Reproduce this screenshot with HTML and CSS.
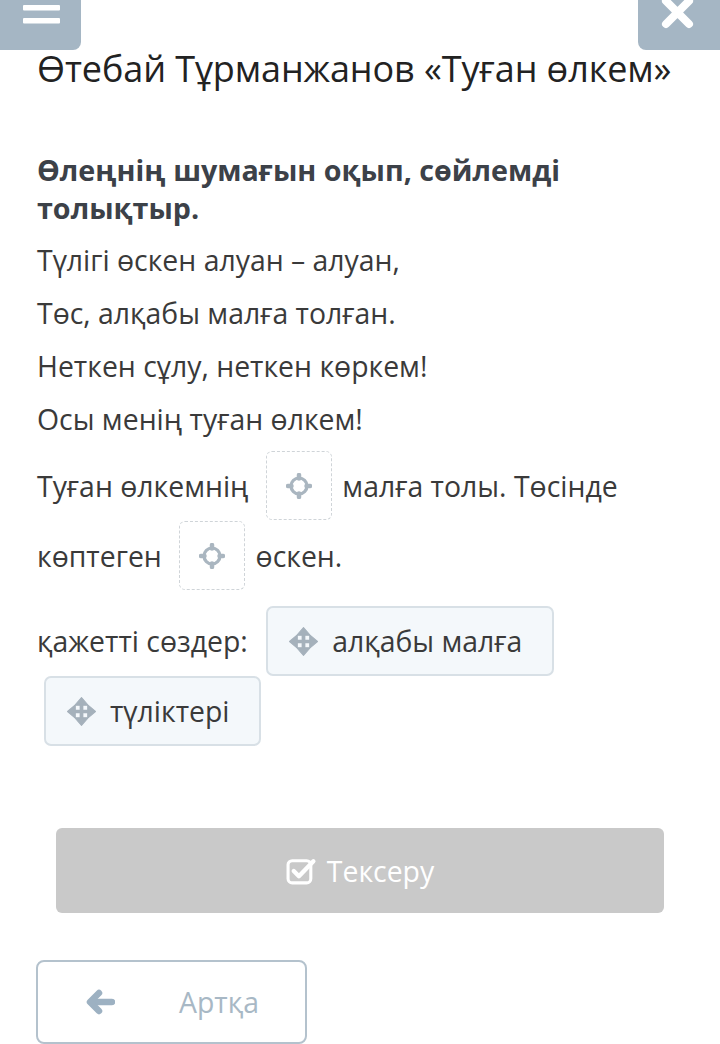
FILE: index.html
```html
<!DOCTYPE html>
<html lang="kk">
<head>
<meta charset="utf-8">
<title>Туған өлкем</title>
<link rel="stylesheet" href="styles.css">
</head>
<body>
<div class="topbar">
  <button class="corner corner-left" aria-label="menu">
    <svg class="corner-icon" viewBox="0 0 81 50" width="81" height="50"><rect x="23" y="-8" width="37" height="5.5" rx="1" fill="#fff"/><rect x="23" y="5" width="37" height="5.5" rx="1" fill="#fff"/><rect x="23" y="18" width="37" height="5.5" rx="1" fill="#fff"/></svg>
  </button>
  <button class="corner corner-right" aria-label="close">
    <svg class="corner-icon" viewBox="0 0 82 50" width="82" height="50"><path d="M28 1 L51 24 M51 1 L28 24" stroke="#fff" stroke-width="8" stroke-linecap="round"/></svg>
  </button>
</div>
<main class="content">
  <h1 class="title">Өтебай Тұрманжанов «Туған өлкем»</h1>
  <h2 class="task">Өлеңнің шумағын оқып, сөйлемді толықтыр.</h2>
  <div class="poem">
    <p>Түлігі өскен алуан – алуан,</p>
    <p>Төс, алқабы малға толған.</p>
    <p>Неткен сұлу, неткен көркем!</p>
    <p>Осы менің туған өлкем!</p>
  </div>
  <p class="sentence">Туған өлкемнің <span class="drop"><svg viewBox="0 0 26 26" width="26" height="26"><circle cx="13" cy="13" r="8" fill="none" stroke="#aab6c0" stroke-width="3.2"/><path d="M13 2 V5.5 M13 20.5 V24 M2 13 H5.5 M20.5 13 H24" stroke="#aab6c0" stroke-width="4.5" stroke-linecap="round"/></svg></span> малға толы. Төсінде көптеген <span class="drop"><svg viewBox="0 0 26 26" width="26" height="26"><circle cx="13" cy="13" r="8" fill="none" stroke="#aab6c0" stroke-width="3.2"/><path d="M13 2 V5.5 M13 20.5 V24 M2 13 H5.5 M20.5 13 H24" stroke="#aab6c0" stroke-width="4.5" stroke-linecap="round"/></svg></span> өскен.</p>
  <p class="words"><span class="words-label">қажетті сөздер:</span> <span class="chip"><svg class="move" viewBox="0 0 28 28" width="29" height="29"><path d="M14 6 V22 M6 14 H22" stroke="#a5b1bb" stroke-width="3.6"/><path d="M14 0.5 L7.5 8 H20.5 Z M14 27.5 L7.5 20 H20.5 Z M0.5 14 L8 7.5 V20.5 Z M27.5 14 L20 7.5 V20.5 Z" fill="#a5b1bb" stroke="#a5b1bb" stroke-width="1" stroke-linejoin="round"/></svg>алқабы малға</span><span class="chip"><svg class="move" viewBox="0 0 28 28" width="29" height="29"><path d="M14 6 V22 M6 14 H22" stroke="#a5b1bb" stroke-width="3.6"/><path d="M14 0.5 L7.5 8 H20.5 Z M14 27.5 L7.5 20 H20.5 Z M0.5 14 L8 7.5 V20.5 Z M27.5 14 L20 7.5 V20.5 Z" fill="#a5b1bb" stroke="#a5b1bb" stroke-width="1" stroke-linejoin="round"/></svg>түліктері</span></p>
  <button class="check">
    <svg viewBox="0 0 30 28" width="31" height="29"><rect x="2" y="4.5" width="22" height="21.5" rx="4" fill="none" stroke="#fff" stroke-width="3"/><path d="M7.5 14.5 L12.5 19.5 L26.5 5" fill="none" stroke="#fff" stroke-width="4.2" stroke-linecap="round" stroke-linejoin="round"/></svg>
    <span>Тексеру</span>
  </button>
  <button class="back">
    <svg viewBox="0 0 30 26" width="30" height="26"><path d="M7 13 H27" stroke="#9db1c2" stroke-width="6.5" stroke-linecap="round"/><path d="M14 4 L5 13 L14 22" fill="none" stroke="#9db1c2" stroke-width="6.5" stroke-linecap="round" stroke-linejoin="round"/></svg>
    <span>Артқа</span>
  </button>
</main>
</body>
</html>
```
FILE: styles.css
```css
* { box-sizing: border-box; }
html, body { margin: 0; padding: 0; background: #fff; }
body {
  font-family: "Open Sans", "Noto Sans", sans-serif;
  color: #3a3a3a;
  width: 720px;
  height: 1044px;
  overflow: hidden;
}
.topbar {
  display: flex;
  justify-content: space-between;
  height: 50px;
}
.corner {
  border: 0;
  padding: 0;
  height: 50px;
  background: #a5b6c4;
  overflow: hidden;
}
.corner-left { width: 81px; border-radius: 0 0 8px 0; }
.corner-right { width: 82px; border-radius: 0 0 0 8px; }
.corner-icon { display: block; }
.content { padding: 0 37px; }
.title {
  margin: 0;
  font-weight: 400;
  font-size: 36px;
  line-height: 38px;
  letter-spacing: -0.1px;
  color: #222;
  white-space: nowrap;
}
.task {
  margin: 63px 0 0 0;
  font-weight: 700;
  font-size: 28.7px;
  line-height: 38px;
  color: #3c4148;
}
.poem { margin-top: 12px; }
.poem p {
  margin: 0 0 11px 0;
  font-size: 28.4px;
  line-height: 42px;
}
.sentence {
  margin: 0;
  font-size: 28.4px;
  line-height: 70px;
}
.drop {
  display: inline-flex;
  align-items: center;
  justify-content: center;
  width: 66px;
  height: 69px;
  margin: 0 3px 0 10px;
  border: 1.5px dashed #cfd4d8;
  border-radius: 6px;
  vertical-align: top;
}
.words {
  margin: 15px 0 0 0;
  font-size: 28.4px;
  line-height: 70px;
}
.words-label { margin-right: 4px; }
.chip {
  display: inline-flex;
  align-items: center;
  height: 70px;
  padding: 0 30px 0 21px;
  margin: 0 0 0 7px;
  background: #f4f8fb;
  border: 2px solid #d8e0e6;
  border-radius: 7px;
  vertical-align: top;
  color: #3a3a3a;
}
.move { margin-right: 14px; flex: none; }
.check {
  display: flex;
  align-items: center;
  justify-content: center;
  gap: 10px;
  width: 608px;
  height: 85px;
  margin: 82px 0 0 19px;
  border: 0;
  border-radius: 6px;
  background: #c9c9c9;
  color: #fff;
  font-family: "Open Sans", sans-serif;
  font-size: 28.4px;
  padding: 0;
}
.back {
  display: flex;
  align-items: center;
  width: 271px;
  height: 84px;
  margin: 47px 0 0 -1px;
  padding: 0 0 0 47px;
  border: 2px solid #b4c2cd;
  border-radius: 8px;
  background: #fff;
  color: #a8b8c5;
  font-family: "Open Sans", sans-serif;
  font-size: 28.4px;
}
.back span { margin-left: 64px; }
```
